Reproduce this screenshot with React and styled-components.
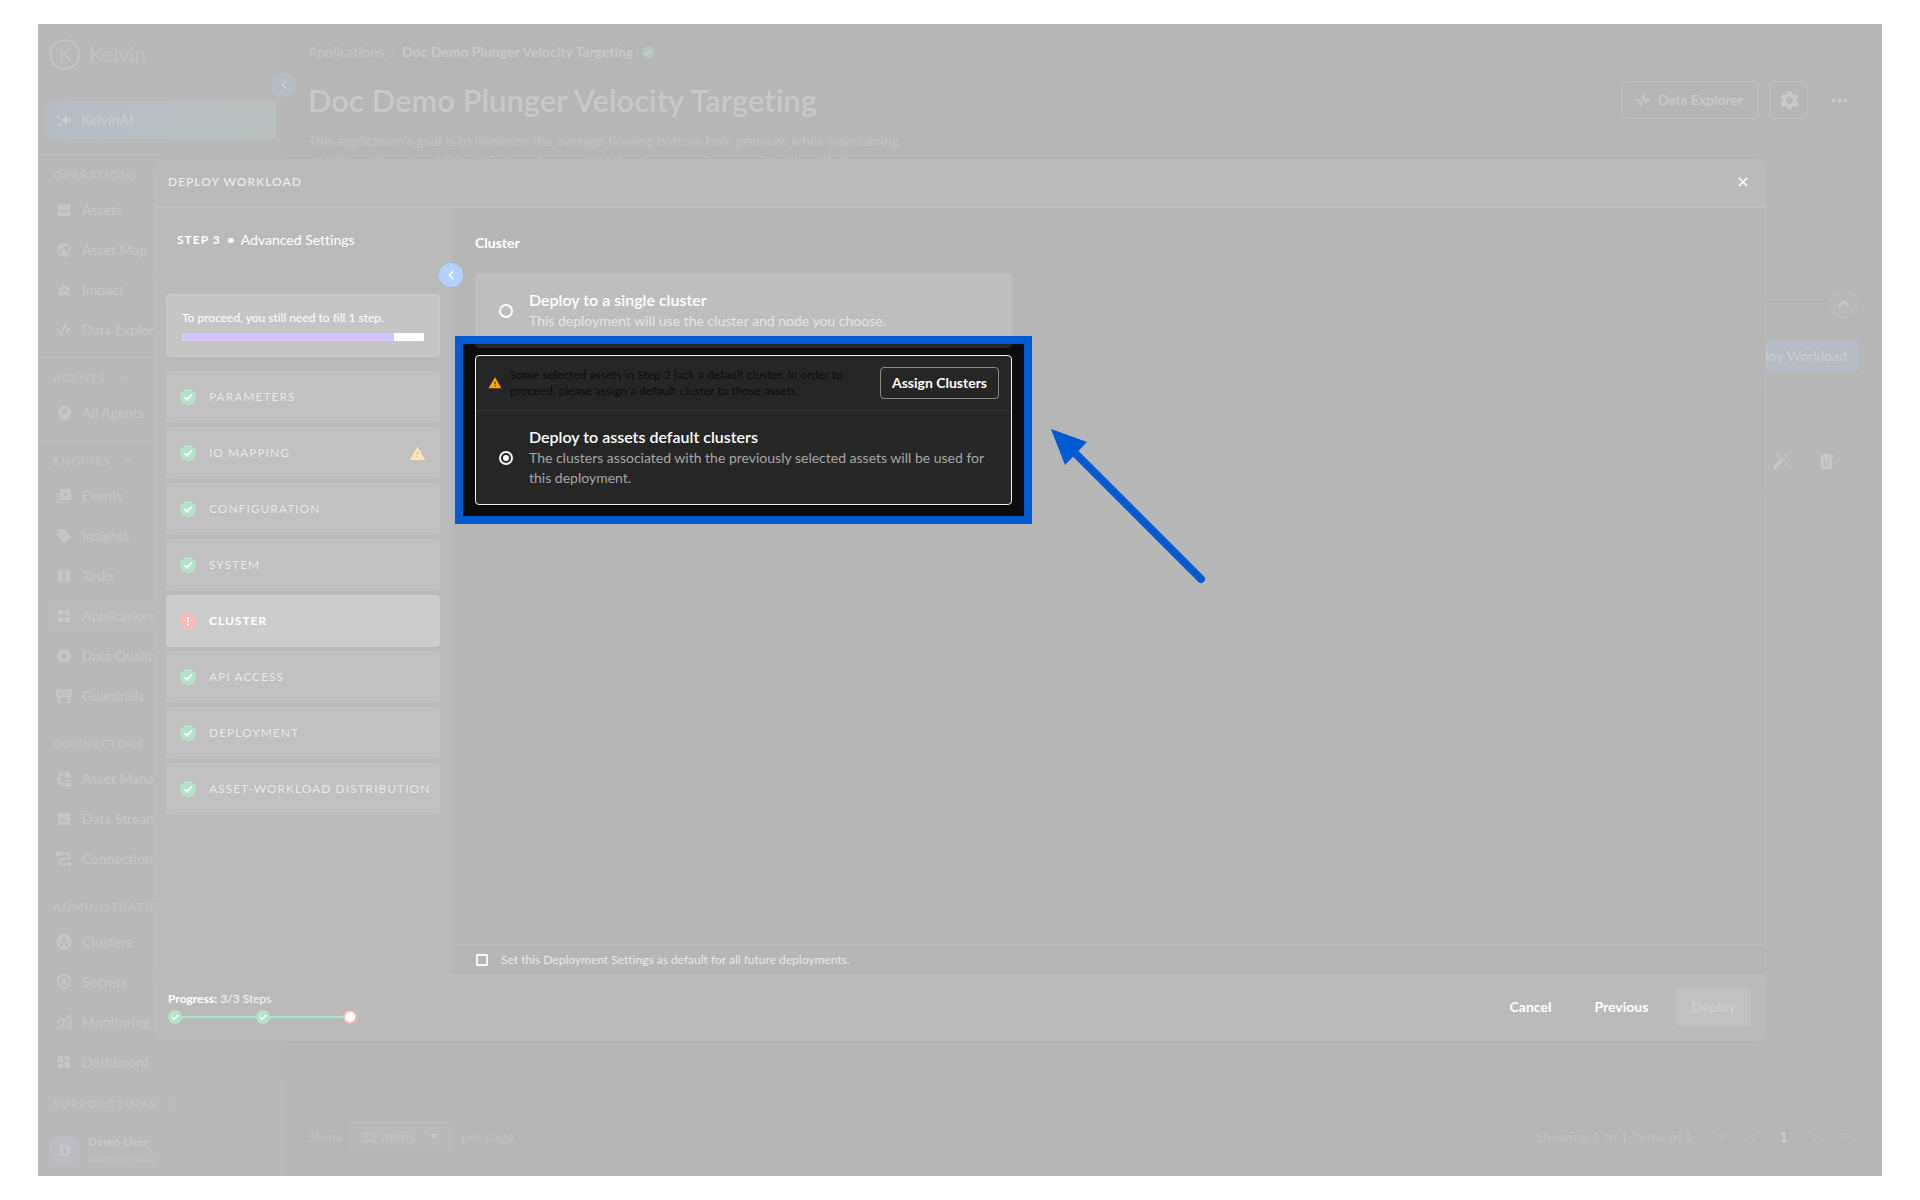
import { useState } from "react";
import styled, { createGlobalStyle, css } from "styled-components";
import {
  MdAreaChart,
  MdAssessment,
  MdAutoFixHigh,
  MdDashboard,
  MdLocalOffer,
  MdMoreHoriz,
  MdPublic,
  MdSettings,
  MdWarning,
  MdWidgets,
} from "react-icons/md";
import {
  ChevronDown,
  ChevronLeft,
  ChevronRight,
  ChevronsLeft,
  ChevronsRight,
  ChevronUp,
} from "lucide-react";

const GlobalStyle = createGlobalStyle`
  *, *::before, *::after {
    box-sizing: border-box;
  }

  body {
    margin: 0;
    background: #ffffff;
    color: #ffffff;
    font-family: Lato, "Liberation Sans", sans-serif;
    font-size: 14px;
    line-height: 20px;
    font-variant-ligatures: none;
  }

  h1, h2, h3, p, ul, ol {
    margin: 0;
    padding: 0;
  }

  ul, ol {
    list-style: none;
  }

  button, select, input {
    font: inherit;
    color: inherit;
    margin: 0;
  }

  button {
    padding: 0;
    border: none;
    background: none;
    cursor: pointer;
  }

  a {
    color: inherit;
    text-decoration: none;
  }

  svg {
    display: block;
    flex: none;
  }
`;

/* ---------- page ---------- */

const Page = styled.div`
  padding: 24px 38px;
`;

const Screen = styled.div`
  position: relative;
  display: flex;
  height: calc(100vh - 48px);
  min-height: 900px;
  overflow: hidden;
  background: #0c0c0c;
`;

const Sidebar = styled.aside`
  position: relative;
  display: flex;
  flex-direction: column;
  flex: none;
  width: 247px;
  background: #121212;
  border-right: 1px solid #191919;
`;

const Brand = styled.div`
  display: flex;
  align-items: center;
  gap: 9px;
  height: 61px;
  padding-left: 11px;
  border-bottom: 1px solid #1c1c1c;
  color: #404040;
  font-size: 22px;
  font-weight: 300;
`;

const RoundButton = styled.button`
  position: absolute;
  display: flex;
  align-items: center;
  justify-content: center;
  width: 24px;
  height: 24px;
  border-radius: 50%;
`;

const CollapseNav = styled(RoundButton)`
  top: 49px;
  right: -12px;
  background: #0c2040;
  color: #5c5c5c;
`;

const AssistantArea = styled.div`
  padding: 16px 8px 15px;
`;

const AssistantButton = styled.button`
  display: flex;
  align-items: center;
  gap: 9px;
  width: 100%;
  height: 38px;
  padding-left: 10px;
  border-radius: 4px;
  background: linear-gradient(90deg, #0a2040, #122e32 65%, #142e2a);
  color: #505050;
  font-weight: 600;
`;

const NavScroll = styled.nav`
  flex: 1;
  min-height: 0;
  overflow: hidden;
`;

const NavSection = styled.section`
  padding-bottom: 8px;
  border-top: 1px solid #1c1c1c;
`;

const NavHeading = styled.h3`
  display: flex;
  align-items: center;
  gap: 12px;
  height: 36px;
  padding: 4px 0 0 15px;
  color: #363636;
  font-size: 12px;
  font-weight: 600;
  letter-spacing: 1px;
  text-transform: uppercase;
`;

const NavList = styled.ul`
  display: grid;
  gap: 2px;
  padding: 0 8px;
`;

const NavLink = styled.a`
  display: flex;
  align-items: center;
  gap: 10px;
  height: 38px;
  padding-left: 10px;
  border-radius: 4px;
  color: #424242;
  background: ${(p) => (p.$active ? "#191919" : "transparent")};
`;

const SidebarFooter = styled.div`
  flex: none;
  height: 93px;
  border-top: 1px solid #161616;
  background: #151515;
`;

const User = styled.div`
  display: flex;
  align-items: center;
  gap: 8px;
  padding: 14px 11px;
  font-size: 12px;
  line-height: 16px;
  color: #363636;
`;

const UserName = styled.p`
  color: #484848;
  font-weight: 700;
`;

const UserMail = styled.p`
  font-size: 10px;
`;

const Avatar = styled.span`
  display: flex;
  align-items: center;
  justify-content: center;
  width: 31px;
  height: 31px;
  border-radius: 50%;
  background: #20203c;
  color: #4c4c4c;
  font-size: 15px;
  font-weight: 700;
`;

const Main = styled.main`
  display: flex;
  flex: 1;
  flex-direction: column;
  min-width: 0;
  padding: 18px 23px;
`;

const Breadcrumb = styled.nav`
  display: flex;
  align-items: center;
  gap: 6px;
  color: #383838;
`;

const Current = styled.strong`
  margin-right: 3px;
  color: #484848;
`;

const TitleRow = styled.header`
  display: flex;
  align-items: center;
  justify-content: space-between;
  height: 38px;
  margin-top: 19px;
`;

const Title = styled.h1`
  color: #484848;
  font-size: 31px;
  font-weight: 600;
  line-height: 38px;
`;

const Actions = styled.div`
  display: flex;
  align-items: center;
  gap: 12px;
  padding-right: 1px;
  color: #4c4c4c;
`;

const OutlineButton = styled.button`
  display: flex;
  align-items: center;
  justify-content: center;
  gap: 8px;
  min-width: 38px;
  height: 38px;
  padding: 0 ${(p) => (p.$wide ? 14 : 0)}px;
  border: 1px solid ${(p) => (p.$plain ? "transparent" : "#2e2e2e")};
  border-radius: 4px;
  font-weight: 600;
`;

const Description = styled.p`
  max-width: 638px;
  height: 60px;
  margin-top: 12px;
  overflow: hidden;
  color: #343434;
`;

const Divider = styled.div`
  display: flex;
  align-items: center;
  justify-content: flex-end;
  margin-top: 97px;

  &::before {
    content: "";
    flex: 1;
    border-top: 1px solid #1c1c1c;
  }
`;

const FoldButton = styled.button`
  display: flex;
  align-items: center;
  justify-content: center;
  width: 31px;
  height: 31px;
  border-radius: 50%;
  background: #141414;
  color: #444444;
`;

const DeployWorkload = styled.button`
  align-self: flex-end;
  height: 31px;
  margin-top: 21px;
  padding: 0 12px;
  border-radius: 4px;
  background: #0c2040;
  color: #505050;
  font-weight: 600;
`;

const Table = styled.table`
  width: 100%;
  margin-top: 20px;
  border-collapse: collapse;
  background: #101010;
  color: #444444;

  th {
    height: 42px;
  }

  td {
    height: 56px;
    padding: 0 24px;
    border: solid #151515;
    border-width: 1px 0;
  }
`;

const RowActions = styled.div`
  display: flex;
  justify-content: flex-end;
  gap: 28px;
`;

const Pager = styled.footer`
  display: flex;
  align-items: center;
  justify-content: space-between;
  margin-top: auto;
  padding-bottom: 6px;
  color: #2c2c2c;
`;

const PageSize = styled.label`
  display: flex;
  align-items: center;
  gap: 7px;
`;

const SelectBox = styled.span`
  display: grid;
  grid-template-columns: 1fr 24px;
  align-items: center;
  width: 105px;
  height: 31px;
  border-radius: 4px;
  background: #151515;
  color: #3c3c3c;

  svg {
    grid-area: 1 / 2;
    pointer-events: none;
  }
`;

const Select = styled.select`
  grid-area: 1 / 1 / 2 / 3;
  height: 31px;
  padding: 0 12px;
  border: none;
  background: none;
  appearance: none;
`;

const Pages = styled.div`
  display: flex;
  align-items: center;
  gap: 14px;
  padding-right: 5px;

  button {
    display: grid;
    place-items: center;
    width: 17px;
  }

  span {
    margin-right: 6px;
  }
`;

const PageNumber = styled.button`
  color: #585858;
  font-weight: 700;
`;

/* ---------- modal ---------- */

const Backdrop = styled.div`
  position: absolute;
  inset: 0;
  z-index: 10;
  display: flex;
  padding: 135px 116px;
`;

const Modal = styled.div`
  display: flex;
  flex: 1;
  flex-direction: column;
  min-width: 0;
  border-radius: 8px;
  background: #191919;
`;

const ModalHeader = styled.header`
  display: flex;
  align-items: center;
  justify-content: space-between;
  height: 49px;
  padding: 0 18px 1px 14px;
  border-bottom: 2px solid #2a2a2a;
`;

const ModalTitle = styled.h2`
  color: #b8b8b8;
  font-size: 12px;
  font-weight: 600;
  letter-spacing: 1px;
  text-transform: uppercase;
`;

const ModalBody = styled.div`
  display: flex;
  flex: 1;
  min-height: 0;
`;

const Steps = styled.div`
  position: relative;
  flex: none;
  width: 298px;
`;

const StepHeader = styled.div`
  display: flex;
  align-items: center;
  gap: 6px;
  height: 67px;
  padding: 0 0 2px 23px;
  border-bottom: 1px solid #2a2a2a;
`;

const StepNumber = styled.strong`
  font-size: 12px;
  letter-spacing: 1px;
`;

const CollapseSteps = styled(RoundButton)`
  top: 55px;
  right: -11px;
  background: #0062ff;
`;

const Notice = styled.div`
  margin: 19px 12px 14px;
  padding: 13px 15px 15px;
  border: 1px solid #505050;
  border-radius: 4px;
  background: #3c3c3c;
  font-size: 12px;
`;

const Progress = styled.div`
  height: 8px;
  margin-top: 5px;
  border-radius: 1px;
  background: #ffffff;
  overflow: hidden;
`;

const ProgressFill = styled.div`
  height: 100%;
  background: #7440f5;
`;

const StepList = styled.ul`
  display: grid;
  grid-template-columns: minmax(0, 1fr);
  gap: 4px;
  padding: 0 12px;
`;

const StepButton = styled.button`
  display: flex;
  align-items: center;
  gap: 13px;
  width: 100%;
  height: 52px;
  padding: 0 14px;
  border-radius: 4px;
  background: #2f2f2f;
  color: #b4b4b4;
  font-size: 12px;
  letter-spacing: 1px;
  text-align: left;
  text-transform: uppercase;

  ${(p) =>
    p.$active &&
    css`
      background: #555555;
      color: #ffffff;
      font-weight: 700;
    `}
`;

const StepLabel = styled.span`
  flex: 1;
  white-space: nowrap;
`;

const Settings = styled.div`
  display: flex;
  flex: 1;
  flex-direction: column;
  min-width: 0;
  background: #0c0c0c;
  border-right: 1px solid #191919;
`;

const SettingsContent = styled.div`
  flex: 1;
  padding: 25px 23px;
`;

const Heading = styled.h3`
  font-size: 14px;
  font-weight: 700;
`;

const Options = styled.div`
  display: grid;
  gap: 7px;
  max-width: 537px;
  margin-top: 20px;
`;

const OptionCard = styled.div`
  position: relative;
  z-index: ${(p) => (p.$selected ? 2 : 0)};
  border: 1px solid ${(p) => (p.$selected ? "#f0f0f0" : "#262626")};
  border-radius: 4px;
  background: #262626;
`;

const OptionLabel = styled.label`
  display: flex;
  align-items: center;
  gap: 16px;
  padding: 16px 23px;
`;

const OptionTitle = styled.strong`
  display: block;
  font-size: 16px;
  font-weight: 600;
`;

const OptionText = styled.span`
  display: block;
  padding-top: 1px;
  color: #a6a6a6;
`;

const Radio = styled.input`
  display: grid;
  flex: none;
  place-items: center;
  width: 14px;
  height: 14px;
  border: 2px solid #f4f4f4;
  border-radius: 50%;
  appearance: none;

  &:checked::before {
    content: "";
    width: 6px;
    height: 6px;
    border-radius: 50%;
    background: #ffffff;
  }
`;

const Alert = styled.div`
  display: flex;
  align-items: center;
  gap: 8px;
  min-height: 55px;
  padding: 0 12px;
  border-bottom: 1px solid #343434;
`;

const AlertText = styled.p`
  flex: 1;
  max-width: 350px;
  color: #0d0d0d;
  font-size: 12px;
  line-height: 16px;
`;

const AssignButton = styled.button`
  height: 32px;
  margin-left: auto;
  padding: 0 11px;
  border: 1px solid #8a8a8a;
  border-radius: 4px;
  font-weight: 700;
`;

const Highlighted = styled.div`
  position: relative;
`;

/* washes out everything on the screen except the framed option */
const Spotlight = styled.div`
  position: absolute;
  inset: -19px -20px;
  z-index: 5;
  border: 8px solid #005bd0;
  box-shadow: 0 0 0 3000px rgba(255, 255, 255, 0.7);
  pointer-events: none;
`;

const Arrow = styled.svg`
  position: absolute;
  top: 85px;
  left: calc(100% + 27px);
`;

const DefaultRow = styled.label`
  display: flex;
  align-items: center;
  gap: 13px;
  height: 31px;
  padding-left: 24px;
  border-top: 1px solid #2a2a2a;
  color: #b8b8b8;
  font-size: 12px;
`;

const Checkbox = styled.input`
  width: 12px;
  height: 12px;
  border: 2px solid #e8e8e8;
  border-radius: 1px;
  appearance: none;

  &:checked {
    background: #e8e8e8;
  }
`;

const ModalFooter = styled.footer`
  display: flex;
  align-items: center;
  justify-content: space-between;
  height: 66px;
  padding: 0 15px 4px 14px;
  border-top: 2px solid #2a2a2a;
`;

const StepsProgress = styled.div`
  font-size: 12px;
  line-height: 16px;
`;

const StepsLabel = styled.p`
  color: #e0e0e0;

  strong {
    color: #ffffff;
  }
`;

const Track = styled.div`
  display: flex;
  align-items: center;
  width: 189px;
  margin-top: 3px;
`;

const TrackLine = styled.span`
  flex: 1;
  height: 2px;
  background: #00a050;
`;

const TrackEnd = styled.span`
  width: 14px;
  height: 14px;
  border: 2px solid #f02010;
  border-radius: 50%;
  background: #ffffff;
`;

const Buttons = styled.div`
  display: flex;
  gap: 13px;
`;

const FooterButton = styled.button`
  height: 38px;
  padding: 0 15px;
  border-radius: 4px;
  font-weight: 700;

  &:disabled {
    background: #303030;
    color: #585858;
    cursor: default;
  }
`;

/* ---------- icons ---------- */

const Icon = ({ size = 16, children }) => (
  <svg width={size} height={size} viewBox="0 0 24 24" fill="currentColor" aria-hidden="true">
    {children}
  </svg>
);

const KelvinLogo = () => (
  <svg width="31" height="31" viewBox="0 0 31 31" fill="none" stroke="currentColor" aria-hidden="true">
    <circle cx="15.5" cy="15.5" r="14.5" strokeWidth="1.6" />
    <path d="M12.5 9.5v13M21 9.5l-8.5 8M15.5 15l6 7.5" strokeWidth="1.3" />
    <circle cx="9" cy="10" r="0.8" fill="currentColor" stroke="none" />
  </svg>
);

const SparkleIcon = () => (
  <Icon>
    <path d="M15 3l2.2 6.3L23.5 12l-6.3 2.5L15 21l-2.3-6.5L6.5 12l6.2-2.7zM3.5 4l1 2.5L7 7.5l-2.5 1-1 2.5-1-2.5L0 7.5l2.5-1zM6 15l1 2.7L9.7 19 7 20.2 6 23l-1.1-2.8L2 19l2.9-1.3z" />
  </Icon>
);

const AssetsIcon = () => (
  <Icon>
    <path d="M2 12V8q0-2 2-2V4q0-1 1-1h3q1 0 1 1v2h1.500V4q0-1 1-1h1q1 0 1 1v2H15V4q0-1 1-1h3q1 0 1 1v2q2 0 2 2v4zM2 14h20v5q0 2-2 2H4q-2 0-2-2z" />
  </Icon>
);

const PulseIcon = ({ size }) => (
  <Icon size={size}>
    <path
      d="M0 12h4l4 9L13 3l4 14 3-7 2 3h2"
      fill="none"
      stroke="currentColor"
      strokeWidth="2.4"
      strokeLinejoin="round"
    />
  </Icon>
);

const AgentIcon = () => (
  <Icon>
    <path
      fillRule="evenodd"
      d="M13 1a10 10 0 0 1 10 10q0 3-2 6l-1 3q-1 1-3 1h-1v2H6v-5a10 10 0 0 1 7-17zM8 15q-2-9 9-10 1 9-6 9l4-5-6 6z"
    />
  </Icon>
);

const EventsIcon = () => (
  <Icon>
    <path
      fillRule="evenodd"
      d="M8 1h13q2 0 2 2v13q0 2-2 2H8q-2 0-2-2V3q0-2 2-2zm6.500 4l-1.300 3H10l2.500 2-1 3 3-1.800 3 1.800-1-3L19 8h-3.200z"
    />
    <path d="M1 6h2.500v13q0 2 2 2H19v2H4q-3 0-3-3z" />
  </Icon>
);

const TasksIcon = () => (
  <Icon>
    <path d="M10.500 1v22q-2 0-3-1.500Q5 21 4.500 19 2 18 2 12t2.500-7Q5 3 7.500 2.500 8.500 1 10.500 1zM13.500 1v22q2 0 3-1.500 2.500-.500 3-2.500 2.500-1 2.500-7t-2.500-7q-.500-2-3-2.500-1-1.500-3-1.500z" />
  </Icon>
);

const QualityIcon = () => (
  <Icon>
    <path
      fillRule="evenodd"
      d="M12 0l3.200 3H20l.500 4.500L24 12l-3.500 4-.500 4.500h-4.800L12 24l-3.200-3.500H4L3.500 16 0 12l3.500-4.500L4 3h4.800zm0 7l-1.500 3.500L7 11l2.500 2.500L9 17l3-2 3 2-.500-3.500L17 11l-3.500-.500z"
    />
  </Icon>
);

const BarrierIcon = () => (
  <Icon>
    <path d="M0 2h24v12H0zM3 14h3v8H3zM18 14h3v8h-3zM1.500 21h6v1.500h-6zM16.500 21h6v1.500h-6z" />
    <path d="M2 12l7-8M7 12l7-8M12 12l7-8M17 12l5-6" stroke="#121212" strokeWidth="1.6" />
  </Icon>
);

const AssetManagerIcon = () => (
  <Icon>
    <path d="M11 1v6a5 5 0 0 0 0 10v6H8.500l-.800-3-2 .500L3 20l-1-3 2-1.500v-2L0 13v-3l4-1-1-3 2-2.500 3 1L8.500 1zM13.500 1q8 1 9.500 9h-9.500zM13.500 13H23v3h-9.500zM13.500 18H23v5h-9.500z" />
  </Icon>
);

const ConnectionsIcon = () => (
  <Icon>
    <path
      d="M4 4h12a4 4 0 0 1 0 8H10a4 4 0 0 0 0 8h10"
      fill="none"
      stroke="currentColor"
      strokeWidth="2.5"
    />
    <circle cx="3.5" cy="4" r="3.5" />
    <circle cx="20.5" cy="20" r="3.5" />
  </Icon>
);

const ClustersIcon = () => (
  <Icon>
    <path
      fillRule="evenodd"
      d="M12 0a12 12 0 1 1 0 24 12 12 0 0 1 0-24zm0 5.500a2.700 2.700 0 1 0 0 5.400 2.700 2.700 0 0 0 0-5.400zm-4 7a2.700 2.700 0 1 0 0 5.400 2.700 2.700 0 0 0 0-5.400zm8 0a2.700 2.700 0 1 0 0 5.400 2.700 2.700 0 0 0 0-5.400z"
    />
  </Icon>
);

const SecretsIcon = () => (
  <Icon>
    <path
      d="M12 1.500l8.500 3V11q0 8-8.500 11.500Q3.500 19 3.500 11V4.500z"
      fill="none"
      stroke="currentColor"
      strokeWidth="2.4"
      strokeLinejoin="round"
    />
    <path d="M8.500 10.500h1V9a2.500 2.500 0 0 1 5 0v1.500h1V17h-7z" />
  </Icon>
);

const MonitoringIcon = () => (
  <Icon>
    <path d="M1 14l7-8 5 5 9-9" fill="none" stroke="currentColor" strokeWidth="2.2" />
    <path d="M1 19h2v4H1zM5 14h2v9H5zM9.500 11h2v12h-2zM14 15h2v8h-2zM18 11h2v12h-2zM21.500 6h2v17h-2z" />
  </Icon>
);

const TrashIcon = () => (
  <Icon size={17}>
    <path
      fillRule="evenodd"
      d="M2.500 3H8l1-1.500h6L16 3h5.500v2.500h-19zM4 6h16v14q0 3-3 3H7q-3 0-3-3zm4.500 3v10.500h2V9zm5 0v10.500h2V9z"
    />
  </Icon>
);

const CheckIcon = ({ size = 16, color = "#00a050", mark = "#ffffff" }) => (
  <svg width={size} height={size} viewBox="0 0 16 16" aria-hidden="true">
    <circle cx="8" cy="8" r="8" fill={color} />
    <path d="M4.500 8.200l2.400 2.500 4.700-5" fill="none" stroke={mark} strokeWidth="1.8" />
  </svg>
);

const ErrorIcon = () => (
  <svg width="16" height="16" viewBox="0 0 16 16" aria-hidden="true">
    <circle cx="8" cy="8" r="8" fill="#f01c08" />
    <path d="M7 4h2v5H7zM7 10.500h2v2H7z" fill="#ffffff" />
  </svg>
);

const CloseIcon = () => (
  <svg width="10" height="10" viewBox="0 0 10 10" aria-hidden="true">
    <path d="M1 1l8 8M9 1L1 9" stroke="currentColor" strokeWidth="1.6" />
  </svg>
);

const CaretIcon = () => (
  <svg width="8" height="5" viewBox="0 0 8 5" aria-hidden="true">
    <path d="M0 0h8L4 5z" fill="#444444" />
  </svg>
);

/* ---------- data ---------- */

const sections = [
  {
    title: "Operations",
    items: [
      ["Assets", AssetsIcon],
      ["Asset Map", MdPublic],
      ["Impact", MdAreaChart],
      ["Data Explorer", PulseIcon],
    ],
  },
  { title: "Agents", items: [["All Agents", AgentIcon]] },
  {
    title: "Engines",
    items: [
      ["Events", EventsIcon],
      ["Insights", MdLocalOffer],
      ["Tasks", TasksIcon],
      ["Applications", MdWidgets],
      ["Data Quality", QualityIcon],
      ["Guardrails", BarrierIcon],
    ],
  },
  {
    title: "Connectors",
    items: [
      ["Asset Manager", AssetManagerIcon],
      ["Data Streams", MdAssessment],
      ["Connections", ConnectionsIcon],
    ],
  },
  {
    title: "Administration",
    items: [
      ["Clusters", ClustersIcon],
      ["Secrets", SecretsIcon],
      ["Monitoring", MonitoringIcon],
      ["Dashboard", MdDashboard],
    ],
  },
];

const steps = [
  { name: "Parameters" },
  { name: "IO Mapping", warning: true },
  { name: "Configuration" },
  { name: "System" },
  { name: "Cluster", error: true },
  { name: "API Access" },
  { name: "Deployment" },
  { name: "Asset-Workload Distribution" },
];

/* ---------- parts ---------- */

function Navigation() {
  return (
    <Sidebar>
      <Brand>
        <KelvinLogo />
        Kelvin
      </Brand>
      <CollapseNav aria-label="Collapse navigation">
        <ChevronLeft size={14} strokeWidth={2.5} />
      </CollapseNav>
      <AssistantArea>
        <AssistantButton>
          <SparkleIcon />
          KelvinAI
        </AssistantButton>
      </AssistantArea>
      <NavScroll>
        {sections.map((section) => (
          <NavSection key={section.title}>
            <NavHeading>
              {section.title}
              <ChevronDown size={10} strokeWidth={3} />
            </NavHeading>
            <NavList>
              {section.items.map(([label, ItemIcon]) => (
                <li key={label}>
                  <NavLink href="#" $active={label === "Applications"}>
                    <ItemIcon size={16} />
                    {label}
                  </NavLink>
                </li>
              ))}
            </NavList>
          </NavSection>
        ))}
      </NavScroll>
      <SidebarFooter>
        <NavHeading>
          Support Links
          <ChevronRight size={10} strokeWidth={3} />
        </NavHeading>
        <User>
          <Avatar>D</Avatar>
          <div>
            <UserName>Demo User</UserName>
            <UserMail>demo@kelvin.ai</UserMail>
          </div>
        </User>
      </SidebarFooter>
    </Sidebar>
  );
}

function ApplicationPage() {
  return (
    <Main>
      <Breadcrumb aria-label="Breadcrumb">
        <a href="#">Applications</a>
        <span>/</span>
        <Current>Doc Demo Plunger Velocity Targeting</Current>
        <CheckIcon size={13} color="#003c20" mark="#606060" />
      </Breadcrumb>
      <TitleRow>
        <Title>Doc Demo Plunger Velocity Targeting</Title>
        <Actions>
          <OutlineButton $wide>
            <PulseIcon size={14} />
            Data Explorer
          </OutlineButton>
          <OutlineButton aria-label="Settings">
            <MdSettings size={23} />
          </OutlineButton>
          <OutlineButton $plain aria-label="More">
            <MdMoreHoriz size={23} />
          </OutlineButton>
        </Actions>
      </TitleRow>
      <Description>
        This application's goal is to minimize the average flowing bottom hole
        pressure while maintaining stability of flow. In addition it is to make
        sure that the plunger arrives consistently with the proper column
      </Description>
      <Divider>
        <FoldButton aria-label="Fold section">
          <ChevronUp size={17} strokeWidth={3} />
        </FoldButton>
      </Divider>
      <DeployWorkload>Deploy Workload</DeployWorkload>
      <Table>
        <thead>
          <tr>
            <th aria-label="Actions" />
          </tr>
        </thead>
        <tbody>
          <tr>
            <td>
              <RowActions>
                <button aria-label="Configure">
                  <MdAutoFixHigh size={18} />
                </button>
                <button aria-label="Delete">
                  <TrashIcon />
                </button>
              </RowActions>
            </td>
          </tr>
        </tbody>
      </Table>
      <Pager>
        <PageSize>
          Show
          <SelectBox>
            <Select defaultValue="32">
              <option value="32">32 items</option>
            </Select>
            <CaretIcon />
          </SelectBox>
          per page
        </PageSize>
        <Pages>
          <span>Showing 1 to 1 items of 1</span>
          <button aria-label="First page">
            <ChevronsLeft size={15} />
          </button>
          <button aria-label="Previous page">
            <ChevronLeft size={14} />
          </button>
          <PageNumber>1</PageNumber>
          <button aria-label="Next page">
            <ChevronRight size={14} />
          </button>
          <button aria-label="Last page">
            <ChevronsRight size={15} />
          </button>
        </Pages>
      </Pager>
    </Main>
  );
}

function StepsPanel() {
  const done = 7;

  return (
    <Steps>
      <StepHeader>
        <StepNumber>STEP 3</StepNumber>
        <span>•</span>
        <span>Advanced Settings</span>
      </StepHeader>
      <CollapseSteps aria-label="Collapse steps">
        <ChevronLeft size={14} strokeWidth={3} />
      </CollapseSteps>
      <Notice>
        <p>To proceed, you still need to fill 1 step.</p>
        <Progress>
          <ProgressFill style={{ width: `${(done / steps.length) * 100}%` }} />
        </Progress>
      </Notice>
      <StepList>
        {steps.map((step) => (
          <li key={step.name}>
            <StepButton $active={step.error}>
              {step.error ? <ErrorIcon /> : <CheckIcon />}
              <StepLabel>{step.name}</StepLabel>
              {step.warning && <MdWarning size={17} color="#ffa800" />}
            </StepButton>
          </li>
        ))}
      </StepList>
    </Steps>
  );
}

function ClusterSettings() {
  const [target, setTarget] = useState("default");
  const handleChange = (event) => setTarget(event.target.value);

  return (
    <Settings>
      <SettingsContent>
        <Heading>Cluster</Heading>
        <Options>
          <OptionCard>
            <OptionLabel>
              <Radio
                type="radio"
                name="target"
                value="single"
                checked={target === "single"}
                onChange={handleChange}
              />
              <span>
                <OptionTitle>Deploy to a single cluster</OptionTitle>
                <OptionText>
                  This deployment will use the cluster and node you choose.
                </OptionText>
              </span>
            </OptionLabel>
          </OptionCard>
          <Highlighted>
            <OptionCard $selected>
              <Alert>
                <MdWarning size={14} color="#ffa800" />
                <AlertText>
                  Some selected assets in Step 2 lack a default cluster. In
                  order to proceed, please assign a default cluster to those
                  assets.
                </AlertText>
                <AssignButton>Assign Clusters</AssignButton>
              </Alert>
              <OptionLabel>
                <Radio
                  type="radio"
                  name="target"
                  value="default"
                  checked={target === "default"}
                  onChange={handleChange}
                />
                <span>
                  <OptionTitle>Deploy to assets default clusters</OptionTitle>
                  <OptionText>
                    The clusters associated with the previously selected assets
                    will be used for this deployment.
                  </OptionText>
                </span>
              </OptionLabel>
            </OptionCard>
            <Spotlight>
              <Arrow width="160" height="160" viewBox="0 0 160 160">
                <path d="M150 150L24 24" stroke="#005bd0" strokeWidth="8" strokeLinecap="round" />
                <path d="M0 0l36 13L14 36z" fill="#005bd0" />
              </Arrow>
            </Spotlight>
          </Highlighted>
        </Options>
      </SettingsContent>
      <DefaultRow>
        <Checkbox type="checkbox" />
        Set this Deployment Settings as default for all future deployments.
      </DefaultRow>
    </Settings>
  );
}

function DeployModal() {
  return (
    <Backdrop>
      <Modal role="dialog" aria-label="Deploy Workload">
        <ModalHeader>
          <ModalTitle>Deploy Workload</ModalTitle>
          <button aria-label="Close">
            <CloseIcon />
          </button>
        </ModalHeader>
        <ModalBody>
          <StepsPanel />
          <ClusterSettings />
        </ModalBody>
        <ModalFooter>
          <StepsProgress>
            <StepsLabel>
              <strong>Progress:</strong> 3/3 Steps
            </StepsLabel>
            <Track>
              <CheckIcon size={14} />
              <TrackLine />
              <CheckIcon size={14} />
              <TrackLine />
              <TrackEnd />
            </Track>
          </StepsProgress>
          <Buttons>
            <FooterButton>Cancel</FooterButton>
            <FooterButton>Previous</FooterButton>
            <FooterButton disabled>Deploy</FooterButton>
          </Buttons>
        </ModalFooter>
      </Modal>
    </Backdrop>
  );
}

export default function App() {
  return (
    <Page>
      <GlobalStyle />
      <Screen>
        <Navigation />
        <ApplicationPage />
        <DeployModal />
      </Screen>
    </Page>
  );
}
